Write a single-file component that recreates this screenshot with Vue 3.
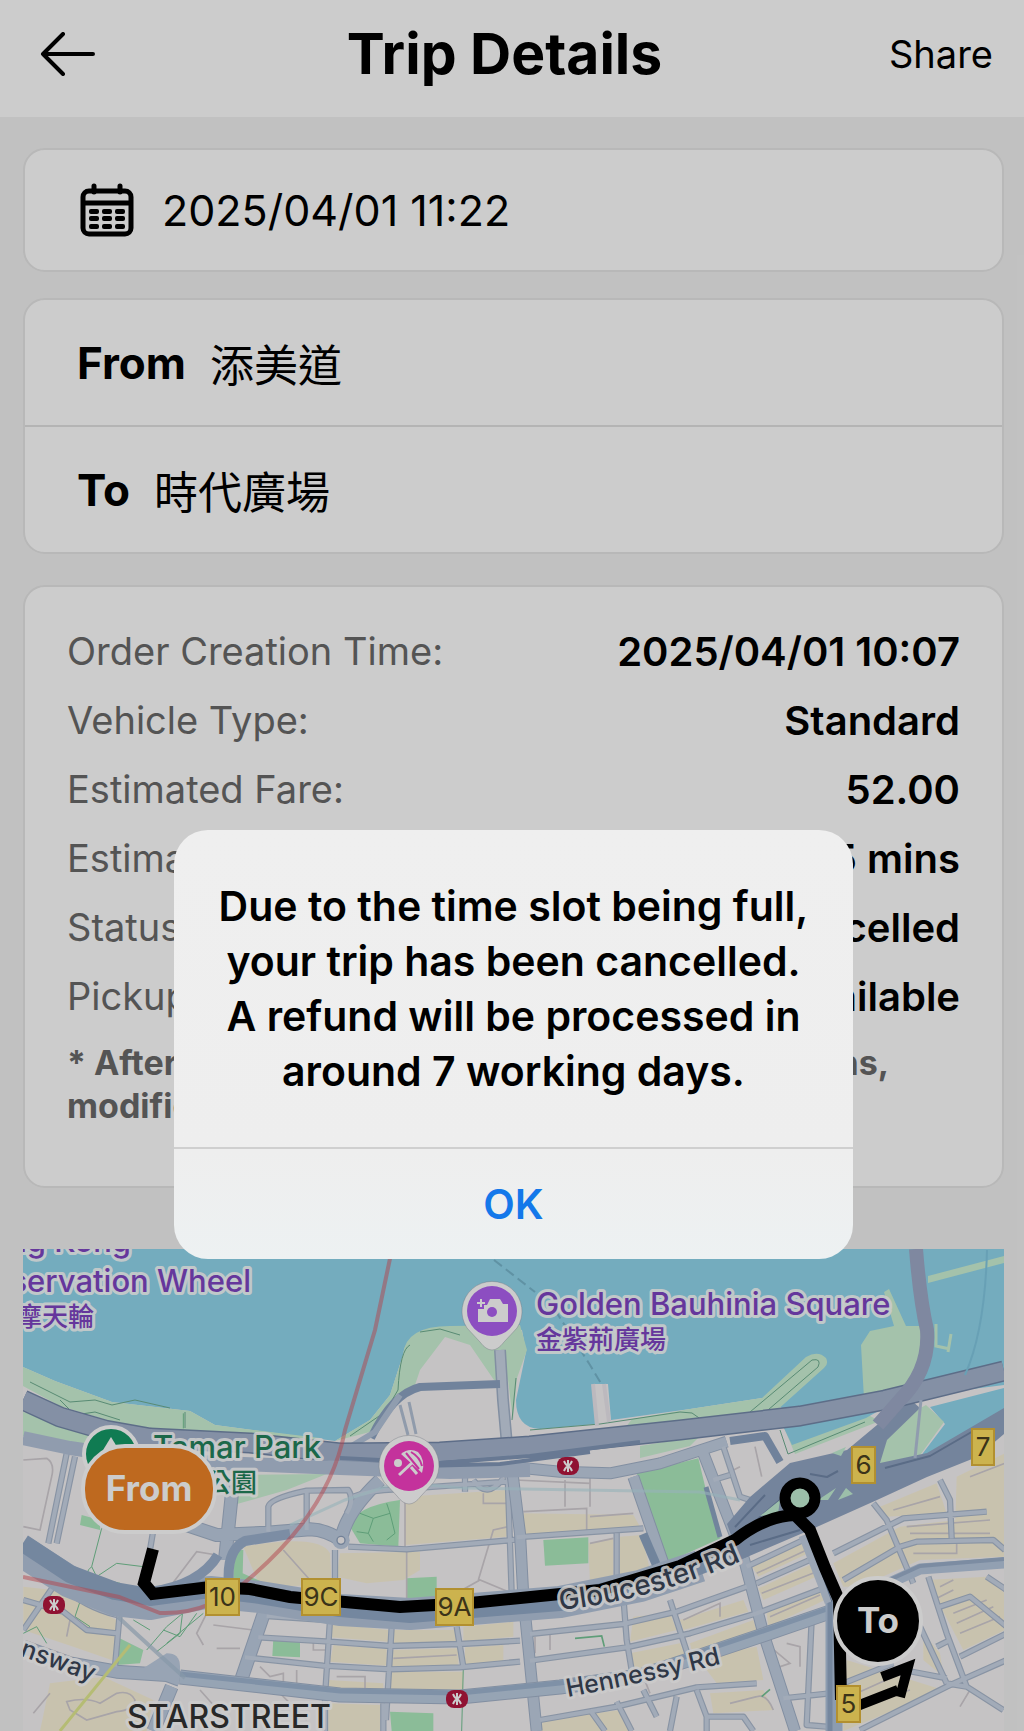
<template>
  <div class="page">
    <header class="topbar">
      <button class="back" type="button" aria-label="Back">
        <svg width="56" height="44" viewBox="0 0 56 44">
          <path d="M23 2 3 22 23 42M3 22H53" fill="none" stroke="#000" stroke-width="4" stroke-linecap="round" stroke-linejoin="round" />
        </svg>
      </button>
      <h1>Trip Details</h1>
      <button class="share" type="button">Share</button>
    </header>

    <main class="content">
      <section class="card date-card">
        <svg class="calendar" width="54" height="54" viewBox="0 0 54 54">
          <rect x="3" y="8" width="48" height="43" rx="6" fill="none" stroke="#000" stroke-width="5" />
          <path d="M3 20H51" stroke="#000" stroke-width="5" />
          <path d="M14 3V9M40 3V9" stroke="#000" stroke-width="5" stroke-linecap="round" />
          <g fill="#000">
            <template v-for="y in [26, 33, 41]" :key="y">
              <rect v-for="x in [9, 22, 35]" :key="x" :x="x" :y="y" width="10" height="5" rx="2" />
            </template>
          </g>
        </svg>
        <time>2025/04/01 11:22</time>
      </section>

      <section class="card places">
        <div v-for="place in places" :key="place.label" class="place">
          <strong>{{ place.label }}</strong>
          <span>{{ place.name }}</span>
        </div>
      </section>

      <section class="card details">
        <dl>
          <div v-for="row in details" :key="row.label" class="row">
            <dt>{{ row.label }}</dt>
            <dd>{{ row.value }}</dd>
          </div>
        </dl>
        <p class="note">* After the driver accepts any of the reservations,<br>modifications cannot be made.</p>
      </section>

      <svg class="map" viewBox="23 1249 981 482" role="img" aria-label="Route map">
        <defs>
          <path id="gloucester" d="M560 1610Q655 1600 750 1557" />
          <path id="hennessy" d="M568 1697Q650 1682 740 1659" />
          <g id="mtr">
            <rect x="-11" y="-9" width="22" height="18" rx="8" fill="#b5173f" />
            <path d="M0-6V6M-4-5Q0 4 4-5M-4 5Q0-4 4 5" fill="none" stroke="#fff" stroke-width="2" />
          </g>
          <g id="west-streets" fill="none" stroke-linejoin="round">
            <path d="M140 160 85 430M165 170 110 430M1000 290Q1050 270 1130 268L1460 245M985 440 1160 448 1500 418M945 450V550M1462 200 1475 580M1335 230V275M1360 240Q1400 300 1450 235M860 270V390" />
            <path d="M740 648 920 660 1160 678 1500 645M715 712 930 725 1110 738 1320 732 1500 722M675 772 910 797 1110 808 1320 802 1500 785M930 660 915 890M1115 680 1098 960M1310 680 1330 800M915 900V993M1090 910V993" />
            <path d="M110 545 10 690M110 550Q200 625 290 645M10 600 130 635 200 690 290 700M300 630 285 800M400 390 390 450" />
            <path d="M745 395V320Q750 295 860 272L985 270Q1005 300 980 340" />
          </g>
          <g id="west-avenues" fill="none" stroke-linejoin="round">
            <path d="M640 240 615 480M500 375 590 405 740 398 870 388Q920 390 963 421 975 340 1080 240M735 630 660 850M10 740 150 790 290 815 440 825 480 840M455 860 400 993" />
          </g>
          <g id="east-streets" fill="none" stroke-linejoin="round">
            <path d="M20 412 400 385M320 400V545M340 590 350 720 370 840M480 600 545 800M60 702 340 672 500 635 710 560M60 782 350 742 540 700 740 640 940 565M710 500 880 420M740 550 910 475" />
            <path d="M1090 310 1130 360 1210 550M970 460 1180 355 1430 335M1000 540 1170 440 1220 425 1450 420 1485 450M1290 240 1320 300 1325 415M1255 530 1310 700 1370 860M1290 620 1380 590 1490 680M1430 530 1490 570M1230 680 1310 850M1280 740 1320 720M1350 770 1490 700M1050 990 1310 860 1490 780M1310 850 1370 860 1480 930M1180 810 1310 835" />
            <path d="M905 660 890 975 950 980M960 880 820 895M0 880 160 870M90 960 320 920 560 862 740 850M320 905 365 993M400 870 440 950M560 870 590 950V993M590 950H700L730 993M240 930 285 993M500 890 480 993M1000 850 1150 790M610 240 660 225M640 140 690 290 720 300" />
          </g>
          <g id="east-avenues" fill="none" stroke-linejoin="round">
            <path d="M5 200 30 400 40 590 80 993M370 230 460 490M580 160 700 470 760 700 855 993M0 200 150 215 300 220 450 190 650 125" />
          </g>
        </defs>

        <rect x="23" y="1249" width="981" height="482" fill="#91d7ee" />

        <!-- land and waterfront -->
        <path fill="#f7f4f5" d="M23 1367 55 1381 112 1402 190 1411 215 1425 245 1429 335 1441 370 1420 390 1395 403 1355Q405 1330 450 1327L522 1330 526 1352 516 1400Q516 1428 540 1429L596 1424 594 1384H608L611 1420 690 1409 762 1398 790 1412 1004 1385V1731H23Z" />
        <g fill="#cdf3d6">
          <path d="M23 1367 55 1381 112 1402 190 1411 215 1425 245 1429 320 1438V1446L200 1434 120 1424 60 1406 23 1386Z" />
          <path d="M23 1412 60 1422 100 1438 95 1450 70 1446 23 1436Z" />
          <path d="M335 1441 370 1420 390 1395 403 1355Q405 1326 450 1326L520 1325 527 1350 517 1378 513 1420 508 1380 494 1380 470 1345 445 1337 420 1370 415 1385 385 1412 370 1432Z" />
          <path d="M625 1428 632 1419 690 1409 762 1398 806 1357Q818 1350 826 1358 829 1364 824 1368L775 1412 700 1424Z" />
          <path d="M780 1418 870 1416 880 1421 795 1454Z" />
          <path d="M894 1326 884 1292 889 1289 906 1326 921 1326 926 1346 916 1375 900 1392 864 1399 861 1345 870 1331Z" />
          <path d="M928 1276 1004 1256V1263L928 1283Z" />
          <path d="M936 1324V1346L950 1349M951 1334 948 1352" fill="none" stroke="#cdf3d6" stroke-width="3" />
          <path d="M640 1446 700 1436 690 1446 640 1458Z" />
        </g>
        <g fill="#91d7ee">
          <path d="M782 1424 882 1409 866 1418 792 1445Z" />
          <path d="M920 1457 945 1424 930 1407 1004 1388V1410L972 1432Z" />
        </g>
        <path fill="#cdf3d6" d="M872 1462 880 1430 926 1405 944 1422 918 1458 880 1468Z" />

        <!-- west side: blocks, parks, streets -->
        <svg x="20" y="1400" width="500" height="331" viewBox="0 0 1500 993" overflow="visible">
          <g fill="#fbf3da">
            <path d="M10 560 100 570 290 660V785L160 740 10 690Z" />
            <path d="M670 440Q900 400 930 460L935 555 720 560Z" />
            <path d="M960 460 1200 455V510L1150 540 1040 550 950 530Z" />
            <path d="M1155 290 1460 270V410L1155 435Z" />
            <path d="M930 670 1105 690V725L930 712ZM1120 690 1310 690 1315 725 1120 732ZM1330 680 1480 665V710L1330 725ZM940 735 1100 747V797L930 785ZM1120 750 1315 745V795L1115 800ZM1335 742 1450 735V785L1335 795ZM1115 815 1330 815V875L1110 880ZM925 840 1090 850V880L925 875Z" />
            <path d="M90 850 250 830 400 900 380 993H60ZM925 910 1080 915V993H925Z" />
          </g>
          <g fill="#aeecbf">
            <path d="M990 380Q1000 320 1140 300L1135 440 1020 430Z" />
            <path d="M1160 535 1250 530V590L1160 598ZM760 715 840 718V772L757 768ZM290 795V710L370 750 360 790ZM1110 935 1240 940V993H1115Z" />
            <path d="M640 540Q640 440 670 450L668 520 770 565 700 560ZM185 345 240 360V390L180 375Z" />
          </g>
          <path d="M660 225 920 222 800 270 640 315Z" fill="#cdf3d6" />
          <g fill="none" stroke="#d2cdd2" stroke-width="5">
            <path d="M10 180 80 175Q105 190 95 230L60 390 10 380M450 560 530 455 590 465M790 450 870 540M1155 290V440M1160 445V600M1465 380 1420 390 1375 540M1290 590 1380 540 1465 575M1390 280V310H1460M560 640 530 700 550 735M590 745H660M580 675 700 690M880 720V750H920M1120 775 1310 765M950 830H1035V870M140 710 150 660M720 800 750 830 790 820V870M830 810V870" />
            <path d="M140 905Q200 890 240 910L290 880Q330 870 345 900 340 930 290 935L200 960 150 930ZM40 940 90 880M540 870 620 960M760 860 860 960" />
          </g>
          <g fill="none" stroke="#76c596" stroke-width="3">
            <path d="M245 385 215 500 230 530 290 490 370 500M215 500Q190 520 215 530L300 550M1020 340 1060 355 1110 340 1125 400 1100 420M1060 355 1045 400 1010 395M1100 310 1110 340M1045 400 1060 425M185 590 165 650 210 680M340 660 390 690M380 750 440 680 500 630M410 755 480 700 490 620M430 690 480 710 530 640M440 730 550 640M10 700 50 680 80 730M1330 800 1325 993M490 40V85" />
          </g>
          <use href="#west-avenues" stroke="#a3b3ca" stroke-width="42" />
          <use href="#west-streets" stroke="#abb9cd" stroke-width="19" />
          <use href="#west-avenues" stroke="#becde1" stroke-width="36" />
          <use href="#west-streets" stroke="#cbd6e7" stroke-width="12" />
          <path d="M370 805 440 760Q480 760 480 800V830L380 830Z" fill="#becde1" />
          <circle cx="963" cy="421" r="26" fill="#becde1" />
          <circle cx="963" cy="421" r="12" fill="#f7f4f5" stroke="#8fa2be" stroke-width="4" />
        </svg>

        <!-- east side -->
        <svg x="510" y="1400" width="500" height="331" viewBox="0 0 1500 993" overflow="visible">
          <g fill="#fbf3da">
            <path d="M40 340 370 345 390 380 40 405ZM235 430 310 415V540L240 550ZM330 410 395 405 420 510 330 530Z" />
            <path d="M720 490 880 420 895 460 745 530ZM745 565 910 490 930 525 760 600ZM770 640 930 560 945 600 775 680Z" />
            <path d="M370 650 480 640 500 690 360 725ZM510 660 700 600 715 635 520 690ZM360 760 510 730 530 780 370 820ZM540 730 730 660 740 690 550 770Z" />
            <path d="M970 490 1170 380 1420 350 1485 400V470L1230 480 1050 560 1000 560ZM1110 320 1280 250 1310 340 1130 350ZM1340 230 1485 160V400L1335 400Z" />
            <path d="M1250 540 1430 530 1485 580V690L1360 750ZM1010 780 1300 870 1000 993ZM560 770 740 740 760 840 620 850ZM100 960 330 930 370 993H90ZM600 880 760 870 790 930 610 940ZM1240 700 1290 760 1300 830 1240 780Z" />
          </g>
          <g fill="#aeecbf">
            <path d="M380 220 565 175 595 300 632 415 465 490Z" />
            <path d="M100 420 235 412V490L105 497Z" />
          </g>
          <g fill="none" stroke="#d2cdd2" stroke-width="5">
            <path d="M165 240V320M240 220V320M15 240 240 250M40 335 230 325V400M240 350 370 340M240 430 310 415M735 140 755 230M660 215 690 200" />
            <path d="M740 520 890 450M755 580 920 515M780 650 930 585M1020 520 1160 450M1190 380 1440 360M1200 400H1440M1210 460H1340V430M1150 330 1290 290M1380 230 1485 190M1330 640 1430 600M1340 670 1450 620M1350 700 1470 650M1290 560 1330 540M1270 600 1330 570M520 660 630 610V650M75 710V760M120 700V750M400 830 420 880M780 740 840 790 810 800V860M830 730 870 740V800M1040 880 1150 830M1040 920 1200 870M660 910 740 890Q770 880 790 930M1380 870 1350 920" />
          </g>
          <path d="M195 715 275 708 283 740M755 890 780 868" fill="none" stroke="#76c596" stroke-width="5" />
          <use href="#east-avenues" stroke="#a3b3ca" stroke-width="36" />
          <use href="#east-streets" stroke="#abb9cd" stroke-width="19" />
          <use href="#east-avenues" stroke="#c2d0e3" stroke-width="30" />
          <use href="#east-streets" stroke="#cbd6e7" stroke-width="12" />
        </svg>

        <g fill="none" stroke="#6fae91" stroke-width="1">
          <path d="M30 1382 70 1402 95 1400 112 1405 135 1400 170 1408M60 1400 75 1415 95 1412 120 1420M185 1412V1428M350 1436 385 1412 398 1390Q400 1350 410 1345M420 1332 440 1329 460 1335M516 1378 512 1420M530 1430 600 1424 680 1412 692 1413 702 1420M750 1412 812 1360Q822 1358 818 1367L768 1410M780 1430 788 1454 865 1422" />
        </g>
        <path d="M593 1384 597 1426M604 1384 609 1422" stroke="#ebe8ee" stroke-width="4" />

        <!-- white parcels near the convention centre -->
        <path d="M415 1400 425 1389 500 1389V1440L430 1440 410 1428Z" fill="#f7f4f5" />
        <g fill="none">
          <path d="M500 1350 503 1400 507 1445" stroke="#a3b3ca" stroke-width="12" />
          <path d="M500 1350 503 1400 507 1445" stroke="#cbd6e7" stroke-width="9" />
          <path d="M400 1405 408 1435M409 1402 416 1434" stroke="#b4c2d6" stroke-width="3" />
        </g>

        <!-- main roads -->
        <g fill="none" stroke-linejoin="round">
          <path d="M180 1677 340 1695 460 1697 560 1687 640 1676 757 1637 830 1612" stroke="#a3b3ca" stroke-width="15" />
          <path d="M180 1677 340 1695 460 1697 560 1687 640 1676 757 1637 830 1612" stroke="#bccde2" stroke-width="13" />
          <path d="M180 1674 340 1691 460 1693 560 1683 640 1672 757 1633 830 1608" stroke="#9fb6d1" stroke-width="5" />
          <path d="M885 1585 920 1569 1004 1563" stroke="#b7c8df" stroke-width="11" />
          <path d="M885 1582 920 1566 1004 1559" stroke="#9bb0cb" stroke-width="4" />
          <path d="M118 1617 165 1660 185 1678" stroke="#a9bfd3" stroke-width="4" opacity="0.7" />
          <path d="M834 1595V1731" stroke="#b0c3dc" stroke-width="17" />
          <path d="M830 1600V1731" stroke="#93a9c6" stroke-width="5" />
          <path d="M804 1535 830 1602" stroke="#c2d0e3" stroke-width="11" />
          <path d="M808 1535 832 1602" stroke="#6e86a8" stroke-width="1" />
          <path d="M23 1552 70 1582 115 1600 150 1604 210 1592 260 1597 340 1610 410 1614 560 1602 640 1586 700 1566" stroke="#b5c5db" stroke-width="32" />
          <path d="M23 1543 70 1574 115 1591 150 1597 210 1589 260 1595 340 1608 410 1614 560 1602 680 1573 745 1548" stroke="#92a9c7" stroke-width="18" />
          <path d="M150 1592Q200 1585 218 1555M229 1585Q226 1550 245 1541L290 1534" stroke="#9cb1cd" stroke-width="10" />
          <path d="M371 1438Q392 1394 420 1387L500 1384" stroke="#8ea4c3" stroke-width="8" />
          <path d="M345 1450 375 1432 400 1395" stroke="#b5c5db" stroke-width="6" />
          <path d="M643 1534 656 1564" stroke="#8ea6c4" stroke-width="9" />
          <path d="M706 1487 720 1537" stroke="#8ea6c4" stroke-width="5" />
        </g>
        <path fill="#92a5c3" d="M727 1524 750 1497 790 1463 847 1450 883 1420 905 1395 920 1408 887 1440 880 1463 927 1453 1004 1408V1434L977 1457 927 1477 877 1500 810 1530 740 1560Z" />
        <g fill="none" stroke-linejoin="round">
          <path d="M735 1527 765 1495M745 1530 780 1500M810 1474 827 1477 838 1471M885 1468 930 1456 975 1430M750 1545 800 1530" stroke="#7187a8" stroke-width="2" />
          <path d="M23 1400 60 1417 105 1430 150 1438 250 1443 340 1453 440 1452 530 1446 680 1430 800 1416 885 1400 1004 1371" stroke="#7589aa" stroke-width="21" />
          <path d="M23 1400 60 1417 105 1430 150 1438 250 1443 340 1453 440 1452 530 1446 680 1430 800 1416 885 1400 1004 1371" stroke="#a5b5cf" stroke-width="18" />
          <path d="M23 1438 70 1448 150 1460 340 1468 450 1472 530 1470" stroke="#b5c4da" stroke-width="14" />
          <path d="M340 1458 440 1463 530 1456 640 1442M420 1466 500 1464 590 1452" stroke="#8298b8" stroke-width="4" />
          <path d="M730 1441 765 1436 780 1462" stroke="#8da3c2" stroke-width="8" />
          <path d="M916 1249Q920 1300 927 1330 930 1370 900 1400L878 1425" stroke="#9faac8" stroke-width="14" />
        </g>
        <path fill="#c3efd5" d="M760 1516 780 1500 778 1514ZM838 1500 846 1488 853 1494ZM818 1500 836 1488 828 1500ZM832 1453 846 1447 841 1456Z" />
        <circle cx="800" cy="1498" r="13" fill="#c3efd5" />
        <g fill="none" stroke="#78b7cd" stroke-width="2">
          <path d="M494 1260 535 1292M555 1310 590 1365 602 1385" stroke-dasharray="10 5" />
          <path d="M987 1250Q985 1330 965 1375" stroke="#82c9e3" />
          <path d="M290 1525 345 1500 400 1482 460 1488 700 1492 740 1500" stroke="#bddfe8" stroke-width="3" opacity="0.6" />
          <path d="M921 1400 915 1458" stroke="#b5c4da" stroke-width="3" />
        </g>
        <path d="M392 1249 375 1330 345 1430Q330 1510 250 1578 210 1615 160 1613L119 1597 23 1577" fill="none" stroke="#e0555f" stroke-width="4" opacity="0.5" />
        <path d="M60 1731 130 1645" stroke="#e3ec92" stroke-width="3" />

        <!-- booked route -->
        <g fill="none" stroke="#000" stroke-linejoin="miter">
          <path d="M153 1549 144 1583 153 1594 210 1587 250 1589 290 1597 400 1607 470 1603 600 1590 680 1566 735 1540Q765 1516 795 1515L810 1530 825 1568 839 1600 841 1700" stroke-width="12" />
          <circle cx="800" cy="1498" r="15" stroke-width="11" />
          <path d="M852 1708 898 1690M882 1677 908 1667 900 1697" stroke-width="10" />
        </g>

        <use v-for="(stop, i) in stations" :key="i" href="#mtr" :x="stop.x" :y="stop.y" />

        <g v-for="exit in exits" :key="exit.label">
          <rect :x="exit.x" :y="exit.y" :width="exit.w" height="36" fill="#ffe062" stroke="#dfb43c" stroke-width="2" />
          <text class="exit" :x="exit.x + exit.w / 2" :y="exit.y + 27">{{ exit.label }}</text>
        </g>

        <!-- place names -->
        <g class="label road">
          <text><textPath href="#gloucester">Gloucester Rd</textPath></text>
          <text class="minor"><textPath href="#hennessy">Hennessy Rd</textPath></text>
          <text class="minor" transform="translate(92 1682) rotate(20)" text-anchor="end">Queensway</text>
          <text class="district" x="127" y="1728">STARSTREET</text>
        </g>
        <g class="label sight">
          <text x="131" y="1252" text-anchor="end">Hong Kong</text>
          <text x="251" y="1292" text-anchor="end">Observation Wheel</text>
          <text class="zh" x="94" y="1326" text-anchor="end">香港摩天輪</text>
          <text x="536" y="1315">Golden Bauhinia Square</text>
          <text class="zh" x="536" y="1349">金紫荊廣場</text>
        </g>
        <g class="label park">
          <text x="153" y="1458">Tamar Park</text>
          <text class="zh" x="257" y="1492" text-anchor="end">添馬公園</text>
        </g>

        <!-- pins -->
        <circle cx="111" cy="1454" r="27" fill="#159a67" stroke="#fff" stroke-width="4" />
        <path d="M111 1437 122 1455H100Z" fill="#fff" />

        <path d="M492 1350Q486 1350 480 1342L467 1328A30 30 0 1 1 517 1328L504 1342Q498 1350 492 1350Z" fill="#fff" stroke="#8c94a0" stroke-opacity="0.4" />
        <circle cx="492" cy="1311" r="25" fill="#b062f2" />
        <path fill="#fff" d="M484 1305H487L490 1299H500L503 1304H508V1322H478V1309H484Z" />
        <path d="M481 1299V1307M477 1303H485" stroke="#fff" stroke-width="2" />
        <circle cx="492" cy="1312" r="5" fill="#b062f2" />

        <path d="M409 1504Q403 1504 397 1496L384 1482A30 30 0 1 1 434 1482L421 1496Q415 1504 409 1504Z" fill="#fff" stroke="#8c94a0" stroke-opacity="0.4" />
        <circle cx="409" cy="1466" r="25" fill="#f53fc4" />
        <circle cx="398" cy="1463" r="4" fill="#fff" />
        <path d="M399 1475 414 1461" stroke="#fff" stroke-width="3" />
        <path d="M401 1454Q409 1447 418 1452 426 1460 422 1473Z" fill="#fff" />
        <path d="M406 1453 419 1469M411 1452Q420 1457 422 1466" fill="none" stroke="#f53fc4" stroke-width="2" />
        <path d="M411 1467 417 1474" stroke="#fff" stroke-width="3" />

        <rect x="83" y="1446" width="132" height="86" rx="42" fill="#ee8427" stroke="#fff" stroke-width="4" />
        <text class="pin-text" x="149" y="1501">From</text>
        <circle cx="878" cy="1621" r="43" fill="#000" stroke="#fff" stroke-width="4" />
        <text class="pin-text" x="878" y="1633">To</text>
      </svg>
    </main>

    <div v-if="alertOpen" class="overlay">
      <div class="alert" role="alertdialog" aria-labelledby="alert-message">
        <p id="alert-message">
          Due to the time slot being full,<br>
          your trip has been cancelled.<br>
          A refund will be processed in<br>
          around 7 working days.
        </p>
        <button type="button" @click="alertOpen = false">OK</button>
      </div>
    </div>
  </div>
</template>

<script setup>
import { ref } from 'vue'

const alertOpen = ref(true)

const places = [
  { label: 'From', name: '添美道' },
  { label: 'To', name: '時代廣場' }
]

const details = [
  { label: 'Order Creation Time:', value: '2025/04/01 10:07' },
  { label: 'Vehicle Type:', value: 'Standard' },
  { label: 'Estimated Fare:', value: '52.00' },
  { label: 'Estimated Time:', value: '15 mins' },
  { label: 'Status:', value: 'Cancelled' },
  { label: 'Pickup Code:', value: 'Unavailable' }
]

// highway exit signs on the map
const exits = [
  { label: '10', x: 206, y: 1579, w: 33 },
  { label: '9C', x: 302, y: 1579, w: 38 },
  { label: '9A', x: 436, y: 1589, w: 37 },
  { label: '6', x: 852, y: 1447, w: 23 },
  { label: '7', x: 972, y: 1429, w: 22 },
  { label: '5', x: 837, y: 1686, w: 23 }
]

const stations = [
  { x: 568, y: 1466 },
  { x: 54, y: 1605 },
  { x: 457, y: 1699 }
]
</script>

<style>
body {
  margin: 0;
  background: #f2f2f2;
}
</style>

<style scoped>
.page {
  position: relative;
  min-height: 100vh;
  background: #f2f2f2;
  color: #000;
  font-family: Inter, "Noto Sans CJK TC", sans-serif;
}

button {
  padding: 0;
  border: 0;
  background: none;
  color: inherit;
  font: inherit;
  cursor: pointer;
}

.topbar {
  display: grid;
  grid-template-columns: 1fr auto 1fr;
  align-items: center;
  box-sizing: border-box;
  height: 117px;
  padding: 0 31px 10px 16px;
  background: #fff;
}

.back {
  justify-self: start;
  padding-left: 24px;
  line-height: 0;
}

.topbar h1 {
  margin: 0;
  font-size: 57px;
  font-weight: 700;
  line-height: 64px;
}

.share {
  justify-self: end;
  font-size: 38px;
}

.content {
  padding: 31px 20px 0 23px;
}

.card {
  border: 2px solid #e6e6e6;
  border-radius: 22px;
  background: #fff;
}

.date-card {
  display: flex;
  align-items: center;
  gap: 28px;
  height: 120px;
  margin-bottom: 26px;
  padding-left: 55px;
  font-size: 43px;
}

.places {
  margin-bottom: 31px;
  font-size: 44px;
}

.place {
  display: flex;
  align-items: center;
  gap: 24px;
  height: 125px;
  padding-left: 52px;
}

.place + .place {
  border-top: 2px solid #e2e2e2;
}

.place strong {
  font-weight: 700;
}

.details {
  margin-bottom: 61px;
  padding: 30px 42px 59px;
}

.details dl {
  margin: 0;
}

.row {
  display: flex;
  justify-content: space-between;
  line-height: 69px;
}

.row dt {
  color: #6a6a6a;
  font-size: 38px;
}

.row dd {
  margin: 0;
  font-size: 40px;
  font-weight: 600;
}

.note {
  margin: 10px 0 0;
  color: #6a6a6a;
  font-size: 34px;
  font-weight: 700;
  line-height: 43px;
}

.map {
  display: block;
  width: 100%;
}

.label {
  stroke: #fff;
  stroke-width: 6px;
  stroke-opacity: 0.9;
  stroke-linejoin: round;
  paint-order: stroke;
  font-size: 31px;
  font-weight: 500;
}

.label .zh {
  font-size: 26px;
}

.road {
  fill: #3b4658;
  font-size: 28px;
}

.road .minor {
  font-size: 25px;
}

.road .district {
  fill: #333;
  font-size: 32px;
}

.sight {
  fill: #7f45c4;
}

.park {
  fill: #23825c;
}

.exit {
  fill: #4a4020;
  font-size: 26px;
  text-anchor: middle;
}

.pin-text {
  fill: #fff;
  font-size: 35px;
  font-weight: 700;
  text-anchor: middle;
}

.overlay {
  position: absolute;
  inset: 0;
  display: flex;
  align-items: flex-start;
  justify-content: center;
  padding: 830px 20px 0 23px;
  background: rgba(0, 0, 0, 0.2);
}

.alert {
  width: 100%;
  max-width: 679px;
  overflow: hidden;
  border-radius: 34px;
  background: linear-gradient(#efefef, #eeeeee 75%, #edf1f2);
  text-align: center;
}

.alert p {
  margin: 0;
  padding: 49px 20px 48px;
  font-size: 41px;
  font-weight: 600;
  line-height: 55px;
}

.alert button {
  width: 100%;
  height: 112px;
  border-top: 2px solid #cfcfcf;
  color: #1478ea;
  font-size: 41px;
  font-weight: 600;
}
</style>
